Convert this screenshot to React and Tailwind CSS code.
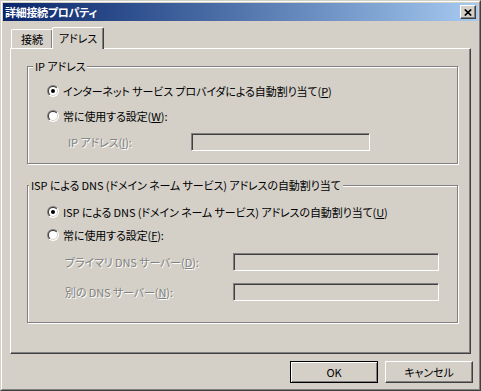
import React from 'react';

const font = "font-['Noto_Sans_CJK_JP','Noto_Sans',sans-serif] [font-feature-settings:'palt'] tracking-[-0.1px]";

const Radio = ({ checked }) => (
  <svg width="12" height="12" viewBox="0 0 12 12" className="shrink-0">
    <defs>
      <linearGradient id="radio-outer" x1="0" y1="0" x2="1" y2="1">
        <stop offset="0.5" stopColor="#808080" />
        <stop offset="0.5" stopColor="#ffffff" />
      </linearGradient>
      <linearGradient id="radio-inner" x1="0" y1="0" x2="1" y2="1">
        <stop offset="0.5" stopColor="#404040" />
        <stop offset="0.5" stopColor="#d4d0c8" />
      </linearGradient>
    </defs>
    <circle cx="6" cy="6" r="6" fill="url(#radio-outer)" />
    <circle cx="6" cy="6" r="5" fill="url(#radio-inner)" />
    <circle cx="6" cy="6" r="4" fill="#ffffff" />
    {checked && <circle cx="6" cy="6" r="2" fill="#000000" />}
  </svg>
);

const Key = ({ children }) => <span className="underline underline-offset-1">{children}</span>;

// sunken, disabled edit box
const Field = ({ width }) => (
  <div
    className={`h-[18px] ${width} border border-t-[#808080] border-l-[#808080] border-b-white border-r-white shadow-[inset_1px_1px_0_#404040] bg-[#d4d0c8]`}
  />
);

const RadioRow = ({ checked, className, children }) => (
  <div className={`flex h-[12px] items-center gap-[4px] pl-[19px] leading-[12px] ${className}`}>
    <Radio checked={checked} />
    <span className="whitespace-nowrap">{children}</span>
  </div>
);

const FieldRow = ({ label, labelWidth, labelPad, fieldWidth, className }) => (
  <div className={`flex h-[18px] items-center ${labelPad} ${className}`}>
    <span className={`${labelWidth} whitespace-nowrap leading-[12px] text-[#808080] [text-shadow:1px_1px_0_#fff]`}>
      {label}
    </span>
    <Field width={fieldWidth} />
  </div>
);

const Group = ({ label, labelMargin, className, children }) => (
  <div
    className={`w-[431px] border border-[#808080] shadow-[inset_1px_1px_0_#fff,1px_1px_0_#fff] ${className}`}
  >
    <div className={`-mt-[7px] w-fit whitespace-nowrap bg-[#d4d0c8] px-[2px] leading-[12px] ${labelMargin}`}>
      {label}
    </div>
    {children}
  </div>
);

export default function App() {
  return (
    <div className={`${font} text-[11px] text-black`}>
      <div className="h-[391px] w-[481px] border border-t-[#d4d0c8] border-l-[#d4d0c8] border-b-[#404040] border-r-[#404040] bg-[#d4d0c8]">
        <div className="flex h-full flex-col border border-t-white border-l-white border-b-[#808080] border-r-[#808080] p-px">
          {/* Title bar */}
          <div className="flex h-[18px] shrink-0 items-center justify-between bg-linear-to-r from-[#0a246a] to-[#a6caf0] pl-[2px] pr-[2px]">
            <span className="text-[11px] font-bold leading-[12px] tracking-[-0.3px] text-white">詳細接続プロパティ</span>
            <button
              type="button"
              className="flex h-[14px] w-[16px] items-center justify-center border border-t-white border-l-white border-b-[#404040] border-r-[#404040] bg-[#d4d0c8] shadow-[inset_-1px_-1px_0_#808080]"
            >
              <svg width="8" height="7" viewBox="0 0 8 7">
                <path d="M0.8 0.5 L7.2 6.5 M7.2 0.5 L0.8 6.5" stroke="#000" strokeWidth="1.7" />
              </svg>
            </button>
          </div>

          {/* Tabs */}
          <div className="mt-[6px] flex items-end pl-[7px]">
            <div className="ml-px flex h-[19px] w-[41px] items-center justify-center rounded-tl-[2px] border-t border-l border-t-white border-l-white [box-shadow:inset_-1px_0_0_#808080,1px_0_0_#404040] leading-[12px]">
              接続
            </div>
            <div className="relative z-10 -mb-px flex h-[22px] w-[52px] items-center justify-center rounded-tl-[2px] rounded-tr-[2px] border-t border-l border-r border-t-white border-l-white border-r-[#404040] bg-[#d4d0c8] pb-[2px] leading-[12px] shadow-[inset_-1px_0_0_#808080]">
              アドレス
            </div>
          </div>

          {/* Tab panel */}
          <div className="ml-[7px] h-[306px] w-[461px] border border-t-white border-l-white border-b-[#404040] border-r-[#404040] shadow-[inset_-1px_-1px_0_#808080]">
            <Group label="IP アドレス" labelMargin="ml-[5px]" className="ml-[16px] mt-[17px] h-[98px]">
              <RadioRow checked className="mt-[13px]">
                インターネット サービス プロバイダによる自動割り当て(<Key>P</Key>)
              </RadioRow>
              <RadioRow className="mt-[13px]">
                常に使用する設定(<Key>W</Key>):
              </RadioRow>
              <FieldRow
                className="mt-[11px]"
                labelPad="pl-[40px]"
                labelWidth="w-[123px]"
                fieldWidth="w-[179px]"
                label={<>IP アドレス(<Key>I</Key>):</>}
              />
            </Group>

            <Group
              label="ISP による DNS (ドメイン ネーム サービス) アドレスの自動割り当て"
              labelMargin="ml-px"
              className="ml-[16px] mt-[21px] h-[138px]"
            >
              <RadioRow checked className="mt-[15px]">
                ISP による DNS (ドメイン ネーム サービス) アドレスの自動割り当て(<Key>U</Key>)
              </RadioRow>
              <RadioRow className="mt-[11px]">
                常に使用する設定(<Key>F</Key>):
              </RadioRow>
              <FieldRow
                className="mt-[12px]"
                labelPad="pl-[37px]"
                labelWidth="w-[168px]"
                fieldWidth="w-[206px]"
                label={<>プライマリ DNS サーバー(<Key>D</Key>):</>}
              />
              <FieldRow
                className="mt-[12px]"
                labelPad="pl-[37px]"
                labelWidth="w-[168px]"
                fieldWidth="w-[206px]"
                label={<>別の DNS サーバー(<Key>N</Key>):</>}
              />
            </Group>
          </div>

          {/* Buttons */}
          <div className="mt-[7px] flex justify-end gap-[7px] pr-[5px]">
            <button
              type="button"
              className="flex h-[22px] w-[88px] items-center justify-center border border-black bg-[#d4d0c8] leading-[12px] shadow-[inset_1px_1px_0_#fff,inset_-1px_-1px_0_#808080]"
            >
              OK
            </button>
            <button
              type="button"
              className="flex h-[22px] w-[88px] items-center justify-center border border-t-white border-l-white border-b-[#404040] border-r-[#404040] bg-[#d4d0c8] leading-[12px] shadow-[inset_-1px_-1px_0_#808080]"
            >
              キャンセル
            </button>
          </div>
        </div>
      </div>
    </div>
  );
}
